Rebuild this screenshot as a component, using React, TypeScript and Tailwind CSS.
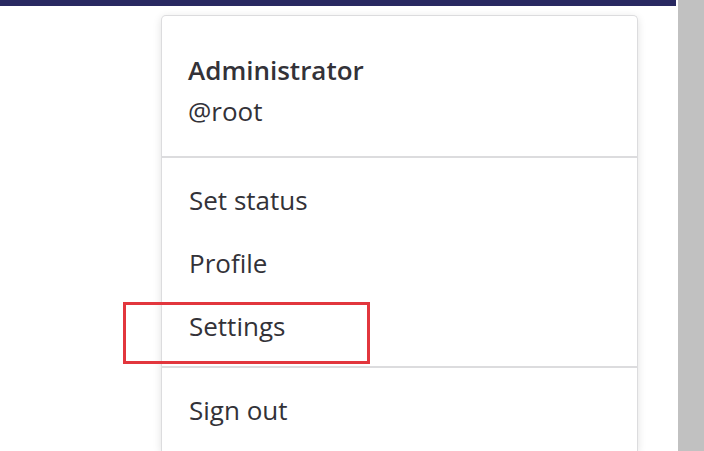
import React from 'react';

const items = ['Set status', 'Profile', 'Settings'];

export default function App() {
  return (
    <div
      className="flex h-[451px] w-[704px] overflow-hidden bg-white text-[#333238]"
      style={{ fontFamily: '"Open Sans", "Noto Sans", sans-serif' }}
    >
      <div className="relative flex flex-1 flex-col">
        <div className="h-[6px] w-[676px] bg-[#292961]" />
        <div className="relative ml-[161px] mt-[9px] w-[477px] flex-1 rounded-t-[5px] border border-b-0 border-[#dcdcde] bg-white shadow-[0_2px_8px_rgba(0,0,0,0.12)]">
          <div className="border-b-2 border-[#dcdcde] px-[26px] pb-[24px] pt-[34px]">
            <div className="text-[26px] font-semibold leading-[41px]">Administrator</div>
            <div className="text-[26px] leading-[41px]">@root</div>
          </div>
          <div className="border-b-2 border-[#dcdcde] pb-[8px] pt-[11px]">
            {items.map((label) => (
              <div key={label} className="flex h-[63px] items-center px-[27px] text-[26px]">
                {label}
              </div>
            ))}
          </div>
          <div className="pt-[11px]">
            <div className="flex h-[63px] items-center px-[27px] text-[26px]">Sign out</div>
          </div>
        </div>
        <div className="absolute left-[123px] top-[302px] h-[62px] w-[247px] border-[3px] border-[#e2363d]" />
      </div>
      <div className="ml-[2px] w-[26px] bg-[#c1c1c1]" />
    </div>
  );
}
